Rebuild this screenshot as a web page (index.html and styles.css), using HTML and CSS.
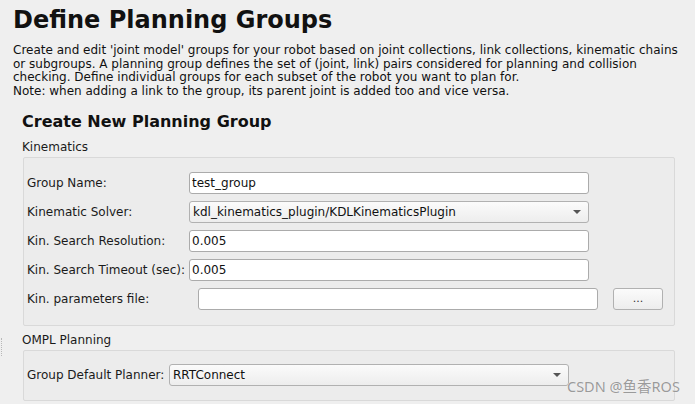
FILE: index.html
```html
<!DOCTYPE html>
<html>
<head>
<meta charset="utf-8">
<link rel="stylesheet" href="styles.css">
</head>
<body>
<div class="page">
  <h1 class="title">Define Planning Groups</h1>
  <p class="desc">Create and edit 'joint model' groups for your robot based on joint collections, link collections, kinematic chains or subgroups. A planning group defines the set of (joint, link) pairs considered for planning and collision checking. Define individual groups for each subset of the robot you want to plan for.<br>Note: when adding a link to the group, its parent joint is added too and vice versa.</p>
  <div class="section">
    <h2 class="subtitle">Create New Planning Group</h2>
    <div class="group-label kin-label">Kinematics</div>
    <div class="groupbox kin">
      <div class="form">
        <label class="lbl">Group Name:</label>
        <div class="input">test_group</div>
        <label class="lbl">Kinematic Solver:</label>
        <div class="combo"><span>kdl_kinematics_plugin/KDLKinematicsPlugin</span><i class="arrow"></i></div>
        <label class="lbl">Kin. Search Resolution:</label>
        <div class="input">0.005</div>
        <label class="lbl">Kin. Search Timeout (sec):</label>
        <div class="input">0.005</div>
        <div class="file-row">
          <label class="lbl file-lbl">Kin. parameters file:</label>
          <div class="input"></div>
          <div class="btn">...</div>
        </div>
      </div>
    </div>
    <div class="group-label ompl-label">OMPL Planning</div>
    <div class="groupbox ompl">
      <div class="form ompl-form">
        <label class="lbl">Group Default Planner:</label>
        <div class="combo"><span>RRTConnect</span><i class="arrow"></i></div>
      </div>
    </div>
  </div>
</div>
<div class="splitter"></div>
<div class="watermark">CSDN @鱼香ROS</div>
</body>
</html>
```

FILE: styles.css
```css
html, body {
  margin: 0;
  padding: 0;
  background: #efefef;
  width: 695px;
  height: 404px;
  overflow: hidden;
  font-family: "DejaVu Sans", "Noto Sans CJK SC", sans-serif;
  color: #1a1a1a;
}
.page {
  padding: 3px 13px 0 13px;
}
.title {
  margin: 0;
  font-size: 24px;
  font-weight: bold;
  line-height: 34px;
  color: #111;
}
.desc {
  margin: 7px 0 0 0;
  font-size: 12px;
  line-height: 13.6px;
  color: #111;
}
.section {
  margin-left: 9px;
  margin-top: 13px;
}
.subtitle {
  margin: 0;
  font-size: 16px;
  font-weight: bold;
  line-height: 22px;
  color: #111;
}
.group-label {
  font-size: 12px;
  line-height: 16px;
  color: #1a1a1a;
}
.kin-label {
  margin-top: 6px;
}
.ompl-label {
  margin-top: 6px;
}
.groupbox {
  margin-left: 1px;
  width: 652px;
  border: 1px solid #d9d9d9;
  border-radius: 2px;
  background: #ececec;
  box-sizing: border-box;
}
.kin {
  margin-top: 2px;
  padding: 14px 0 15px 2px;
}
.ompl {
  margin-top: 2px;
  padding: 13px 0 14px 2px;
}
.form {
  display: grid;
  grid-template-columns: 163px 400px;
  row-gap: 7px;
  align-items: center;
}
.ompl-form {
  grid-template-columns: 143px 400px;
}
.lbl {
  font-size: 12px;
  line-height: 22px;
  padding-left: 1px;
  white-space: nowrap;
}
.input {
  height: 22px;
  box-sizing: border-box;
  background: #fff;
  border: 1px solid #ababab;
  border-radius: 3px;
  font-size: 12px;
  line-height: 20px;
  padding-left: 2px;
  color: #111;
}
.combo {
  height: 22px;
  box-sizing: border-box;
  background: linear-gradient(#fbfbfb, #ededed);
  border: 1px solid #b1b1b1;
  border-radius: 3px;
  font-size: 12px;
  line-height: 20px;
  padding-left: 3px;
  display: flex;
  justify-content: space-between;
  align-items: center;
  color: #111;
}
.arrow {
  width: 0;
  height: 0;
  border-left: 4px solid transparent;
  border-right: 4px solid transparent;
  border-top: 4px solid #555;
  margin-right: 7px;
}
.file-row {
  grid-column: 1 / span 2;
  display: flex;
  align-items: center;
  width: 640px;
}
.file-lbl {
  width: 171px;
  flex: none;
}
.file-row .input {
  width: 400px;
  flex: none;
}
.btn {
  margin-left: 15px;
  width: 50px;
  height: 22px;
  box-sizing: border-box;
  border: 1px solid #b1b1b1;
  border-radius: 3px;
  background: linear-gradient(#fbfbfb, #ededed);
  font-size: 11px;
  line-height: 20px;
  text-align: center;
  color: #333;
}
.splitter {
  position: absolute;
  left: 1px;
  top: 338px;
  height: 18px;
  border-left: 1px dotted #b8b8b8;
}
.watermark {
  position: absolute;
  left: 567px;
  top: 377px;
  font-family: "Noto Sans", "Noto Sans CJK SC", sans-serif;
  font-size: 14.5px;
  line-height: 18px;
  color: #9a9a9a;
  text-shadow: 0 0 1px #fff;
}
```
